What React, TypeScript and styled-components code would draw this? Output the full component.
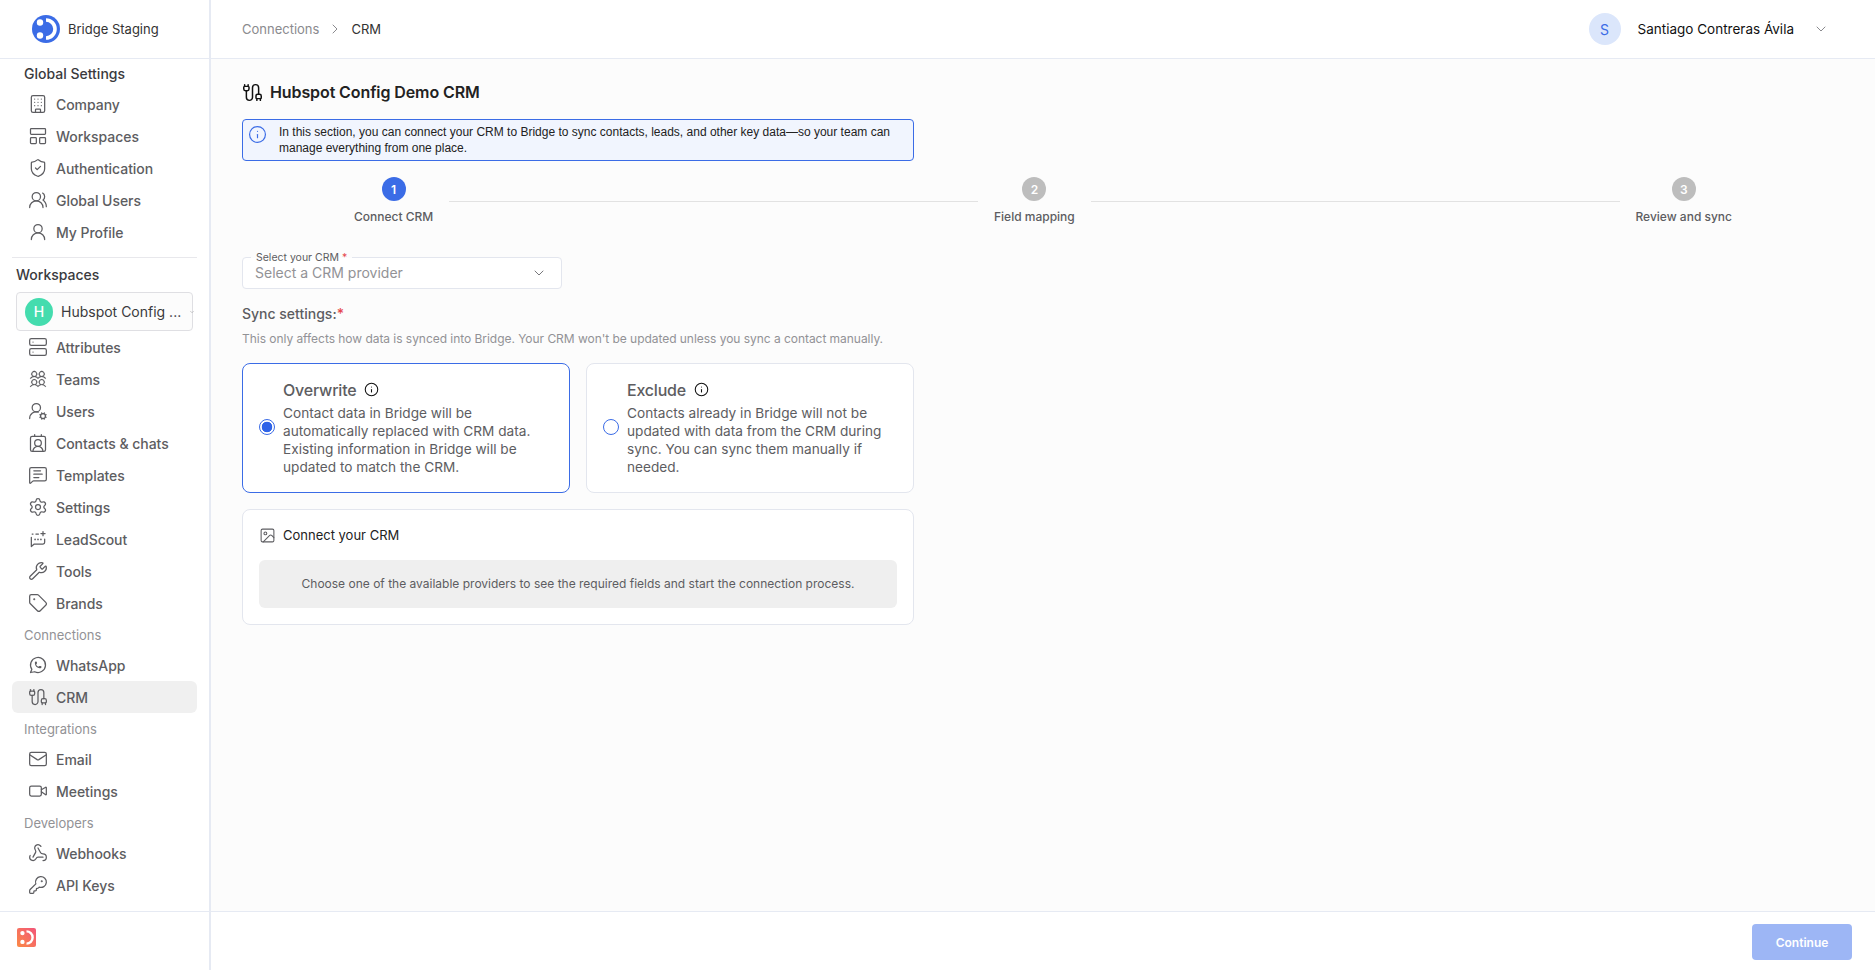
import React from 'react';
import styled, { createGlobalStyle } from 'styled-components';
import {
    Building,
    Cable,
    ChevronDown,
    ChevronRight,
    ContactRound,
    Image as ImageIcon,
    Info,
    KeyRound,
    LayoutPanelTop,
    Mail,
    MessageSquareText,
    Server,
    Settings,
    ShieldCheck,
    Tag,
    UserRound,
    UserRoundCog,
    UsersRound,
    Video,
    Webhook,
    Wrench,
} from 'lucide-react';
import { TbBrandWhatsapp } from 'react-icons/tb';
import { PiUsersFourLight } from 'react-icons/pi';

const GlobalStyle = createGlobalStyle`
    html, body {
        margin: 0;
        padding: 0;
        height: 100%;
        overflow: hidden;
    }
    * {
        box-sizing: border-box;
    }
    body {
        font-family: Inter, "Liberation Sans", sans-serif;
        background: #fff;
    }
`;

const Page = styled.div`
    display: grid;
    grid-template-columns: 211px 1fr;
    height: 970px;
    width: 1875px;
`;

const Sidebar = styled.aside`
    display: flex;
    flex-direction: column;
    height: 970px;
    border-right: 2px solid #e6eaf3;
    background: #fff;
`;

const Brand = styled.div`
    display: flex;
    align-items: center;
    gap: 8px;
    height: 59px;
    padding-left: 32px;
    border-bottom: 1px solid #e6eaf3;
    font-size: 13px;
    color: #333;
`;

const Nav = styled.nav`
    flex: 1;
    display: flex;
    flex-direction: column;
    padding: 0 12px;
`;

const SectionTitle = styled.div<{ $indent?: number; $height?: number }>`
    display: flex;
    align-items: center;
    height: ${(p) => p.$height ?? 30}px;
    padding-left: ${(p) => p.$indent ?? 12}px;
    font-size: 14px;
    font-weight: 500;
    color: #3a3a3d;
`;

const GroupLabel = styled.div`
    display: flex;
    align-items: center;
    height: 30px;
    padding: 2px 0 0 12px;
    font-size: 13px;
    color: #929296;
`;

const NavItem = styled.a<{ $active?: boolean }>`
    display: flex;
    align-items: center;
    gap: 8px;
    height: 32px;
    padding-left: 16px;
    border-radius: 6px;
    font-size: 14px;
    font-weight: 500;
    letter-spacing: -0.05px;
    color: #5d5d61;
    background: ${(p) => (p.$active ? '#f0f0f0' : 'transparent')};

    svg {
        width: 20px;
        height: 20px;
        flex: none;
        stroke-width: 1.5;
    }
`;

const Divider = styled.div`
    height: 1px;
    margin-top: 9px;
    background: #e8e8ec;
`;

const WorkspaceSelect = styled.div`
    display: flex;
    align-items: center;
    gap: 8px;
    height: 39px;
    margin: 1px 4px 0;
    padding: 0 8px;
    border: 1px solid #dfdfe3;
    border-radius: 4px;
    background: #fcfcfc;
    font-size: 14px;
    white-space: nowrap;
    color: #3a3a3d;

    svg {
        width: 6px;
        height: 6px;
        flex: none;
        margin-left: auto;
        margin-right: -3px;
        color: #9a9a9e;
    }
`;

const WorkspaceAvatar = styled.span`
    width: 28px;
    height: 28px;
    flex: none;
    display: flex;
    align-items: center;
    justify-content: center;
    border-radius: 50%;
    background: #44dcae;
    color: #fff;
    font-size: 14px;
    font-weight: 500;
`;

const SidebarFooter = styled.div`
    height: 59px;
    padding: 16px 0 0 17px;
    border-top: 1px solid #e6eaf3;
`;

const Main = styled.div`
    display: flex;
    flex-direction: column;
    min-width: 0;
    height: 970px;
    background: #fcfcfc;
`;

const TopBar = styled.header`
    display: flex;
    align-items: center;
    justify-content: space-between;
    flex: none;
    height: 59px;
    padding: 0 46px 0 31px;
    border-bottom: 1px solid #e6eaf3;
    background: #fff;
`;

const Breadcrumb = styled.div`
    display: flex;
    align-items: center;
    gap: 8px;
    font-size: 13px;
    color: #8a8a8e;

    svg {
        width: 16px;
        height: 16px;
        stroke-width: 1.5;
    }

    b {
        font-weight: 400;
        color: #333;
    }
`;

const UserBox = styled.div`
    display: flex;
    align-items: center;
    font-size: 13.5px;
    color: #111;

    svg {
        width: 16px;
        height: 16px;
        margin-left: 19px;
        color: #8a8a8e;
        stroke-width: 1.5;
    }
`;

const UserAvatar = styled.span`
    width: 32px;
    height: 32px;
    margin-right: 17px;
    display: flex;
    align-items: center;
    justify-content: center;
    border-radius: 50%;
    background: #dbe6fb;
    color: #3b6ce6;
    font-size: 14px;
`;

const Content = styled.main`
    flex: 1;
    padding: 21px 32px 0 31px;
`;

const Title = styled.h1`
    display: flex;
    align-items: center;
    gap: 7px;
    height: 24px;
    margin: 0;
    font-size: 16px;
    font-weight: 600;
    letter-spacing: -0.1px;
    color: #222;

    svg {
        width: 21px;
        height: 21px;
        color: #111;
        stroke-width: 1.7;
    }
`;

const InfoBox = styled.div`
    display: flex;
    gap: 12px;
    width: 672px;
    height: 42px;
    margin-top: 15px;
    padding: 4px 12px 0 5px;
    border: 1px solid #3b6ce6;
    border-radius: 4px;
    background: #f1f5fe;
    font-family: "Liberation Sans", Arial, sans-serif;
    font-size: 12px;
    line-height: 16px;
    color: #222;

    svg {
        width: 19px;
        height: 19px;
        flex: none;
        margin-top: 1px;
        color: #3b6ce6;
        stroke-width: 1.5;
    }
`;

const Stepper = styled.div`
    display: flex;
    align-items: center;
    margin: 16px 95px 0 96px;
`;

const Step = styled.div`
    display: flex;
    flex-direction: column;
    align-items: center;
    padding: 0 16px;
    font-size: 12px;
    font-weight: 500;
    line-height: 17px;
    color: #5d5d61;
`;

const StepCircle = styled.span<{ $active?: boolean }>`
    width: 24px;
    height: 24px;
    margin-bottom: 7px;
    display: flex;
    align-items: center;
    justify-content: center;
    border-radius: 50%;
    background: ${(p) => (p.$active ? '#3b6ce6' : '#bdbdbd')};
    color: #fff;
    font-size: 12px;
    font-weight: 600;
`;

const StepLine = styled.div`
    flex: 1;
    height: 1px;
    background: #e2e2e2;
`;

const SelectField = styled.div`
    position: relative;
    display: flex;
    align-items: center;
    justify-content: space-between;
    width: 320px;
    height: 32px;
    margin-top: 32px;
    padding: 0 14px 1px 12px;
    border: 1px solid #e3e6ee;
    border-radius: 4px;
    background: #fff;
    font-size: 14px;
    color: #929296;

    svg {
        width: 16px;
        height: 16px;
        color: #77777b;
        stroke-width: 1.5;
    }
`;

const FloatingLabel = styled.label`
    position: absolute;
    left: 8px;
    top: -6px;
    padding: 0 5px;
    background: linear-gradient(#fcfcfc 50%, #fff 50%);
    font-size: 10.5px;
    line-height: 12px;
    color: #5d5d61;

    i {
        font-style: normal;
        color: #e5484d;
    }
`;

const SyncTitle = styled.div`
    margin-top: 15px;
    font-size: 14px;
    font-weight: 500;
    line-height: 20px;
    color: #5d5d61;

    i {
        font-style: normal;
        color: #e5484d;
    }
`;

const SyncHelp = styled.div`
    margin-top: 7px;
    font-size: 12px;
    line-height: 16px;
    letter-spacing: -0.04px;
    color: #929296;
`;

const OptionGrid = styled.div`
    display: grid;
    grid-template-columns: 328px 328px;
    gap: 16px;
    margin-top: 16px;
`;

const OptionCard = styled.div<{ $selected?: boolean }>`
    display: flex;
    align-items: center;
    gap: 8px;
    height: 130px;
    padding: 0 16px 3px;
    border: 1px solid ${(p) => (p.$selected ? '#3b6ce6' : '#e3e6ee')};
    border-radius: 8px;
    background: #fff;
`;

const Radio = styled.span<{ $checked?: boolean }>`
    width: 16px;
    height: 16px;
    flex: none;
    border: 1px solid #3b6ce6;
    border-radius: 50%;
    background: ${(p) => (p.$checked ? 'radial-gradient(circle, #2f63e8 5px, #fff 5.6px)' : '#fff')};
`;

const OptionTitle = styled.div`
    display: flex;
    align-items: center;
    gap: 8px;
    margin-bottom: 2px;
    font-size: 16px;
    font-weight: 500;
    letter-spacing: -0.2px;
    line-height: 24px;
    color: #5d5d61;

    svg {
        width: 15px;
        height: 15px;
        color: #111;
        stroke-width: 1.7;
    }
`;

const OptionText = styled.div`
    font-size: 13.65px;
    line-height: 18px;
    color: #5d5d61;
`;

const ConnectCard = styled.section`
    width: 672px;
    height: 116px;
    margin-top: 16px;
    padding: 0 16px;
    border: 1px solid #e3e6ee;
    border-radius: 8px;
    background: #fff;
`;

const ConnectHeader = styled.div`
    display: flex;
    align-items: center;
    gap: 7px;
    height: 50px;
    font-size: 13px;
    color: #222;

    svg {
        width: 17px;
        height: 17px;
        color: #5d5d61;
        stroke-width: 1.5;
    }
`;

const EmptyNote = styled.div`
    display: flex;
    align-items: center;
    justify-content: center;
    height: 48px;
    padding-bottom: 1px;
    border-radius: 6px;
    background: #efefef;
    font-size: 12px;
    color: #5d5d61;
`;

const BottomBar = styled.footer`
    display: flex;
    align-items: center;
    justify-content: flex-end;
    flex: none;
    height: 59px;
    padding: 0 23px 0 0;
    border-top: 1px solid #e6eaf3;
    background: #fff;
`;

const ContinueButton = styled.button`
    width: 100px;
    height: 36px;
    margin-top: 2px;
    border: none;
    border-radius: 4px;
    background: #9db6f5;
    color: #fff;
    font-family: inherit;
    font-size: 12px;
    font-weight: 600;
`;

const LogoMark: React.FC<{ size: number; square?: boolean }> = ({ size, square }) => (
    <svg width={size} height={size} viewBox="0 0 28 28">
        <defs>
            <linearGradient id="red" x1="1" y1="0" x2="0" y2="1">
                <stop offset="0" stopColor="#f2557a" />
                <stop offset="1" stopColor="#fb8a45" />
            </linearGradient>
        </defs>
        {square ? (
            <rect width="28" height="28" rx="3" fill="url(#red)" />
        ) : (
            <circle cx="14" cy="14" r="14" fill="#3b6ce6" />
        )}
        <path d="M14 5a9 9 0 0 1 0 18" fill="none" stroke="#fff" strokeWidth="3.6" />
        <circle cx="8" cy="7.5" r="3.2" fill="#fff" />
        <circle cx="8" cy="20.5" r="3.2" fill="#fff" />
    </svg>
);

const LeadScoutIcon: React.FC = () => (
    <svg viewBox="0 0 24 24" fill="none" stroke="currentColor" strokeLinecap="round" strokeLinejoin="round">
        <path d="M4 10v11l3.5-3H18a2 2 0 0 0 2-2v-4" />
        <path d="M5 6h1M9.5 6h3" />
        <path d="M18 3v5M15.5 5.5h5" />
        <path d="M8.5 12.5h.01M12 12.5h.01M15.5 12.5h.01" strokeWidth="2" />
    </svg>
);

const App: React.FC = () => (
    <>
        <GlobalStyle />
        <Page>
            <Sidebar>
                <Brand>
                    <LogoMark size={28} />
                    Bridge Staging
                </Brand>
                <Nav>
                    <SectionTitle $height={29}>Global Settings</SectionTitle>
                    <NavItem><Building />Company</NavItem>
                    <NavItem><LayoutPanelTop />Workspaces</NavItem>
                    <NavItem><ShieldCheck />Authentication</NavItem>
                    <NavItem><UsersRound />Global Users</NavItem>
                    <NavItem><UserRound />My Profile</NavItem>
                    <Divider />
                    <SectionTitle $indent={4} $height={33}>Workspaces</SectionTitle>
                    <WorkspaceSelect>
                        <WorkspaceAvatar>H</WorkspaceAvatar>
                        Hubspot Config ...
                        <ChevronDown />
                    </WorkspaceSelect>
                    <NavItem><Server />Attributes</NavItem>
                    <NavItem><PiUsersFourLight />Teams</NavItem>
                    <NavItem><UserRoundCog />Users</NavItem>
                    <NavItem><ContactRound />Contacts &amp; chats</NavItem>
                    <NavItem><MessageSquareText />Templates</NavItem>
                    <NavItem><Settings />Settings</NavItem>
                    <NavItem><LeadScoutIcon />LeadScout</NavItem>
                    <NavItem><Wrench />Tools</NavItem>
                    <NavItem><Tag />Brands</NavItem>
                    <GroupLabel>Connections</GroupLabel>
                    <NavItem><TbBrandWhatsapp />WhatsApp</NavItem>
                    <NavItem $active><Cable />CRM</NavItem>
                    <GroupLabel>Integrations</GroupLabel>
                    <NavItem><Mail />Email</NavItem>
                    <NavItem><Video />Meetings</NavItem>
                    <GroupLabel>Developers</GroupLabel>
                    <NavItem><Webhook />Webhooks</NavItem>
                    <NavItem><KeyRound />API Keys</NavItem>
                </Nav>
                <SidebarFooter>
                    <LogoMark size={19} square />
                </SidebarFooter>
            </Sidebar>
            <Main>
                <TopBar>
                    <Breadcrumb>
                        Connections
                        <ChevronRight />
                        <b>CRM</b>
                    </Breadcrumb>
                    <UserBox>
                        <UserAvatar>S</UserAvatar>
                        Santiago Contreras Ávila
                        <ChevronDown />
                    </UserBox>
                </TopBar>
                <Content>
                    <Title><Cable />Hubspot Config Demo CRM</Title>
                    <InfoBox>
                        <Info />
                        <span>
                            In this section, you can connect your CRM to Bridge to sync contacts, leads, and other key data—so your team can
                            manage everything from one place.
                        </span>
                    </InfoBox>
                    <Stepper>
                        <Step><StepCircle $active>1</StepCircle>Connect CRM</Step>
                        <StepLine />
                        <Step><StepCircle>2</StepCircle>Field mapping</Step>
                        <StepLine />
                        <Step><StepCircle>3</StepCircle>Review and sync</Step>
                    </Stepper>
                    <SelectField>
                        <FloatingLabel>Select your CRM <i>*</i></FloatingLabel>
                        Select a CRM provider
                        <ChevronDown />
                    </SelectField>
                    <SyncTitle>Sync settings:<i>*</i></SyncTitle>
                    <SyncHelp>This only affects how data is synced into Bridge. Your CRM won't be updated unless you sync a contact manually.</SyncHelp>
                    <OptionGrid>
                        <OptionCard $selected>
                            <Radio $checked />
                            <div>
                                <OptionTitle>Overwrite <Info /></OptionTitle>
                                <OptionText>
                                    Contact data in Bridge will be automatically replaced with CRM data. Existing information in Bridge will be updated to match the CRM.
                                </OptionText>
                            </div>
                        </OptionCard>
                        <OptionCard>
                            <Radio />
                            <div>
                                <OptionTitle>Exclude <Info /></OptionTitle>
                                <OptionText>
                                    Contacts already in Bridge will not be updated with data from the CRM during sync. You can sync them manually if needed.
                                </OptionText>
                            </div>
                        </OptionCard>
                    </OptionGrid>
                    <ConnectCard>
                        <ConnectHeader><ImageIcon />Connect your CRM</ConnectHeader>
                        <EmptyNote>Choose one of the available providers to see the required fields and start the connection process.</EmptyNote>
                    </ConnectCard>
                </Content>
                <BottomBar>
                    <ContinueButton>Continue</ContinueButton>
                </BottomBar>
            </Main>
        </Page>
    </>
);

export default App;
